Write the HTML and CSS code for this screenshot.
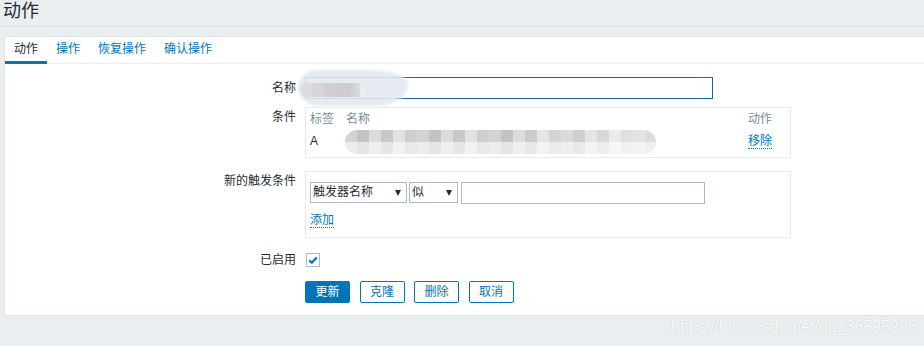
FILE: index.html
```html
<!DOCTYPE html>
<html lang="zh-CN">
<head>
<meta charset="utf-8">
<title>动作</title>
<link rel="stylesheet" href="styles.css">
</head>
<body>
<header class="page-header">
  <h1 class="title">动作</h1>
</header>
<main class="panel">
  <ul class="tabs">
    <li class="tab active">动作</li>
    <li class="tab">操作</li>
    <li class="tab">恢复操作</li>
    <li class="tab">确认操作</li>
  </ul>
  <div class="form">
    <div class="form-row row-name">
      <label class="lbl">名称</label>
      <div class="field">
        <div class="text-input focused wide"></div>
        <div class="smudge"></div>
        <div class="mosaic mosaic-name"></div>
      </div>
    </div>
    <div class="form-row row-cond">
      <label class="lbl">条件</label>
      <div class="field">
        <div class="box box-cond">
          <div class="cond-head">
            <span class="c-tag">标签</span>
            <span class="c-name">名称</span>
            <span class="c-act">动作</span>
          </div>
          <div class="cond-row">
            <span class="c-tag dark">A</span>
            <span class="c-name"></span>
            <span class="c-act"><a class="link">移除</a></span>
          </div>
          <div class="mosaic mosaic-cond"></div>
        </div>
      </div>
    </div>
    <div class="form-row row-new">
      <label class="lbl">新的触发条件</label>
      <div class="field">
        <div class="box box-new">
          <div class="new-line">
            <div class="select sel-1"><span>触发器名称</span><i class="caret"></i></div>
            <div class="select sel-2"><span>似</span><i class="caret"></i></div>
            <div class="text-input value-input"></div>
          </div>
          <div class="add-line"><a class="link">添加</a></div>
        </div>
      </div>
    </div>
    <div class="form-row row-enabled">
      <label class="lbl">已启用</label>
      <div class="field">
        <span class="checkbox">
          <svg width="12" height="12" viewBox="0 0 12 12"><path d="M2.2 6.2 L4.8 8.6 L9.8 3.4" fill="none" stroke="#0275b8" stroke-width="2.2"/></svg>
        </span>
      </div>
    </div>
    <div class="form-row row-buttons">
      <span></span>
      <div class="buttons">
        <button class="btn primary">更新</button>
        <button class="btn">克隆</button>
        <button class="btn">删除</button>
        <button class="btn">取消</button>
      </div>
    </div>
  </div>
</main>
<div class="watermark">https://blog.csdn.net/qq_36595206</div>
</body>
</html>
```

FILE: styles.css
```css
* { box-sizing: border-box; margin: 0; padding: 0; }
html, body { background: #ebeef0; }
body {
  font-family: "Liberation Sans", Arial, "Noto Sans CJK SC", sans-serif;
  font-size: 12px;
  color: #1f2c33;
  width: 924px;
  height: 346px;
  overflow: hidden;
  position: relative;
}
.page-header {
  height: 27px;
  border-bottom: 1px solid #dde2e5;
  padding-left: 3px;
}
.title {
  font-size: 18px;
  font-weight: normal;
  line-height: 22px;
  color: #1f2c33;
}
.panel {
  margin: 9px 0 0 4px;
  height: 280px;
  background: #fff;
  border: 1px solid #dfe4e7;
  border-right: 0;
}
.tabs {
  list-style: none;
  display: flex;
  border-bottom: 1px solid #ebeef0;
}
.tab {
  padding: 5px 9px 5px;
  line-height: 14px;
  border-bottom: 3px solid transparent;
  margin-bottom: -1px;
  color: #0275b8;
}
.tab.active {
  color: #1f2c33;
  border-bottom-color: #0275b8;
}
.form { padding-top: 13px; }
.form-row {
  display: grid;
  grid-template-columns: 291px 486px;
  column-gap: 9px;
}
.lbl {
  text-align: right;
  line-height: 20px;
}
.field { position: relative; }
.row-name .lbl { line-height: 22px; }
.row-cond { margin-top: 8px; }
.row-new { margin-top: 13px; }
.row-enabled { margin-top: 12px; }
.row-buttons { margin-top: 11px; }

.text-input {
  height: 22px;
  border: 1px solid #acbbc2;
  background: #fff;
}
.text-input.wide { width: 408px; }
.text-input.focused { border-color: #1f65a6; }

.smudge {
  position: absolute;
  left: -7px;
  top: -7px;
  width: 110px;
  height: 36px;
  background: rgba(226, 233, 240, 0.9);
  border-radius: 18px 40px 30px 22px / 18px 14px 22px 18px;
  filter: blur(1.5px);
}
.mosaic { position: absolute; filter: blur(0.6px); }
.mosaic-name {
  left: -5px;
  top: 6px;
  width: 66px;
  height: 14px;
  border-radius: 7px;
  background:
    linear-gradient(90deg, rgba(255,255,255,0) 70%, rgba(236,240,244,0.8)),
    linear-gradient(90deg, #dadcde 0 12px, #d6d4d6 12px 24px, #d1cdd1 24px 36px, #cfcccf 36px 48px, #c8c4c8 48px 60px, #e6e6e8 60px);
}
.box {
  border: 1px solid #e6e9eb;
  position: relative;
}
.box-cond {
  height: 51px;
  padding: 0 18px 0 4px;
}
.cond-head, .cond-row {
  display: flex;
  height: 22px;
  line-height: 22px;
}
.cond-head { color: #768d99; }
.c-tag { width: 36px; }
.c-name { flex: 1; }
.c-act { text-align: right; }
.dark { color: #1f2c33; }
.link {
  color: #0275b8;
  border-bottom: 1px dotted #0275b8;
  line-height: 14px;
  display: inline-block;
}
.mosaic-cond {
  left: 39px;
  top: 22px;
  width: 311px;
  height: 24px;
  border-radius: 12px;
  background:
    linear-gradient(180deg, rgba(255,255,255,0) 48%, rgba(255,255,255,0.55) 52%),
    linear-gradient(90deg, rgba(255,255,255,0) 55%, rgba(255,255,255,0.45)),
    repeating-linear-gradient(90deg, #d2d4d4 0 12px, #c3c3c5 12px 24px, #dcdcdc 24px 36px, #c9c9cb 36px 48px, #e2e2e2 48px 60px, #cfcfd1 60px 72px);
}
.box-new {
  height: 67px;
  padding: 10px 4px 0;
}
.new-line {
  display: flex;
  align-items: flex-start;
  gap: 2px;
}
.select {
  height: 21px;
  border: 1px solid #acbbc2;
  display: flex;
  align-items: center;
  justify-content: space-between;
  padding: 0 5px 0 2px;
  line-height: 19px;
}
.sel-1 { width: 97px; }
.sel-2 { width: 49px; }
.caret {
  width: 0;
  height: 0;
  border-left: 3.5px solid transparent;
  border-right: 3.5px solid transparent;
  border-top: 6px solid #1f2c33;
}
.value-input { width: 244px; margin-left: 1px; }
.add-line {
  margin-top: 8px;
  line-height: 16px;
}
.checkbox {
  margin-top: 3px;
  margin-left: 1px;
  width: 14px;
  height: 14px;
  border: 1px solid #acbbc2;
  display: flex;
  align-items: center;
  justify-content: center;
}
.buttons { display: flex; gap: 9.5px; }
.btn {
  height: 22px;
  width: 45px;
  padding: 0;
  border: 1px solid #0275b8;
  border-radius: 2px;
  background: #fff;
  color: #0275b8;
  font: inherit;
  line-height: 20px;
  text-align: center;
}
.btn.primary { background: #0275b8; color: #fff; }
.watermark {
  position: absolute;
  left: 671px;
  top: 317px;
  font-family: "Liberation Sans", Arial, sans-serif;
  font-size: 16px;
  line-height: 20px;
  color: #fcfcfc;
  text-shadow: 0 0 1px #b4b9bc;
}
```
